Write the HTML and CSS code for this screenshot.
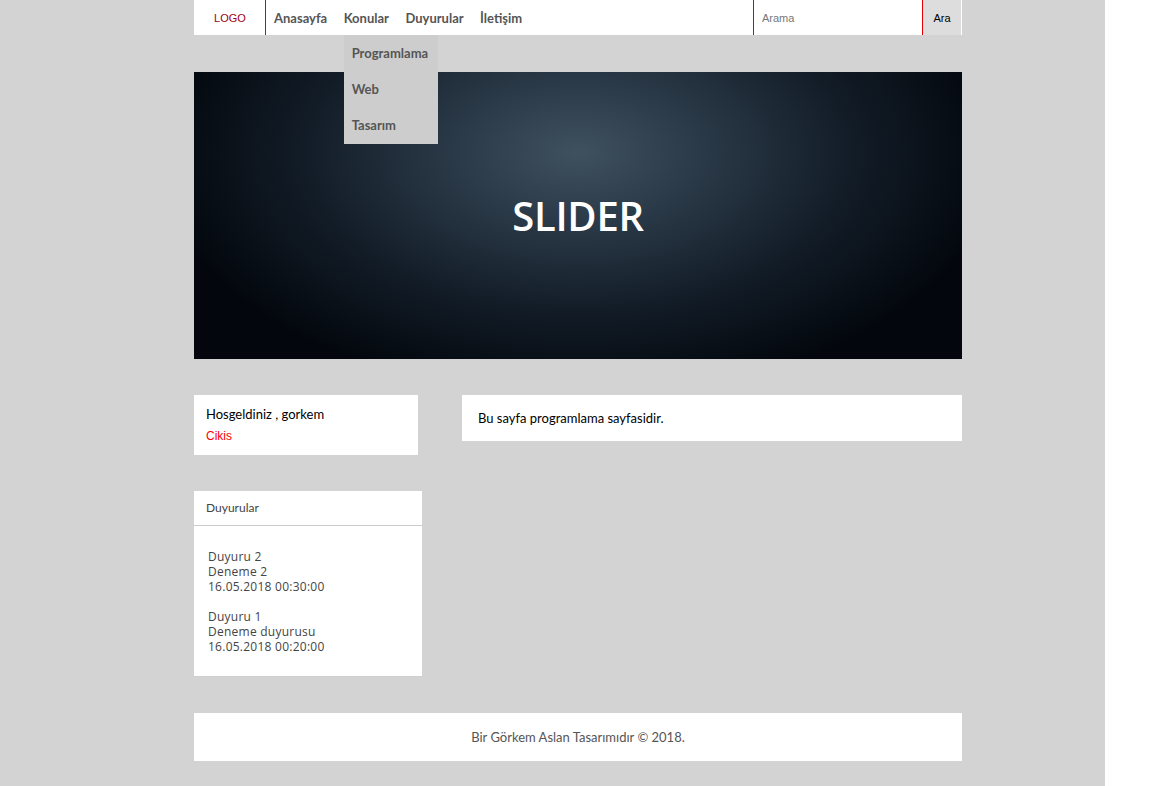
FILE: index.html
```html
<!DOCTYPE html>
<html lang="tr">
<head>
<meta charset="utf-8">
<title>Programlama</title>
<link rel="stylesheet" href="styles.css">
</head>
<body>
<div class="page">
  <div class="container">
    <header class="navbar">
      <div class="logo">LOGO</div>
      <ul class="menu">
        <li><a href="#">Anasayfa</a></li>
        <li class="has-drop"><a href="#">Konular</a>
          <ul class="dropdown">
            <li><a href="#">Programlama</a></li>
            <li><a href="#">Web</a></li>
            <li><a href="#">Tasarım</a></li>
          </ul>
        </li>
        <li><a href="#">Duyurular</a></li>
        <li><a href="#">İletişim</a></li>
      </ul>
      <form class="search">
        <input class="search-input" type="text" placeholder="Arama">
        <button class="search-btn" type="button">Ara</button>
      </form>
    </header>

    <section class="slider">
      <h1 class="slider-title">SLIDER</h1>
    </section>

    <div class="content">
      <aside class="sidebar">
        <div class="box welcome">
          <div class="welcome-text">Hosgeldiniz , gorkem</div>
          <a class="logout" href="#">Cikis</a>
        </div>
        <div class="box news">
          <div class="news-head">Duyurular</div>
          <div class="news-body">
            <div class="news-scroll">
              <div class="news-item">Duyuru 2<br>Deneme 2<br>16.05.2018 00:30:00</div>
              <div class="news-item">Duyuru 1<br>Deneme duyurusu<br>16.05.2018 00:20:00</div>
            </div>
          </div>
        </div>
      </aside>
      <main class="main">
        <div class="box main-box">Bu sayfa programlama sayfasidir.</div>
      </main>
    </div>

    <footer class="footer">Bir Görkem Aslan Tasarımıdır © 2018.</footer>
  </div>
</div>
</body>
</html>
```

FILE: styles.css
```css
* { box-sizing: border-box; }
html, body { margin: 0; padding: 0; background: #ffffff; }
body { font-family: "Lato", "DejaVu Sans", sans-serif; }

.page {
  width: 1105px;
  min-height: 786px;
  background: #d3d3d3;
  padding-bottom: 25px;
}
.container {
  width: 768px;
  margin-left: 194px;
}

/* navbar */
.navbar {
  height: 35px;
  background: #fff;
  display: flex;
  align-items: stretch;
}
.logo {
  width: 72px;
  border-right: 1px solid #e00000;
  color: #a00010;
  font-family: "Liberation Sans", Arial, sans-serif;
  font-size: 11px;
  display: flex;
  align-items: center;
  justify-content: center;
  padding-left: 1px;
}
.menu {
  list-style: none;
  margin: 0;
  padding: 0 0 0 8px;
  display: flex;
  gap: 16.5px;
  flex: 1;
}
.menu > li {
  position: relative;
  display: flex;
  align-items: center;
}
.menu a {
  color: #555;
  font-weight: bold;
  font-size: 13px;
  text-decoration: none;
}
.dropdown {
  position: absolute;
  top: 35px;
  left: 0;
  list-style: none;
  margin: 0;
  padding: 0;
  background: #cdcdcd;
  width: 94px;
  z-index: 5;
}
.dropdown li {
  height: 36px;
  display: flex;
  align-items: center;
  padding-left: 8px;
}
.dropdown li:last-child { height: 37px; padding-bottom: 2px; }

.search {
  display: flex;
  margin: 0 1px 0 0;
}
.search-input {
  width: 170px;
  height: 35px;
  border: none;
  border-left: 1px solid #e00000;
  border-right: 1px solid #e00000;
  padding: 0 8px;
  font-family: "Liberation Sans", Arial, sans-serif;
  font-size: 11px;
  color: #333;
  background: #fff;
  outline: none;
}
.search-input::placeholder { color: #777; }
.search-btn {
  width: 38px;
  height: 35px;
  border: none;
  background: #dddddd;
  font-family: "Liberation Sans", Arial, sans-serif;
  font-size: 11px;
  color: #000;
  padding: 0;
}

/* slider */
.slider {
  margin-top: 37px;
  height: 287px;
  background: radial-gradient(ellipse 55% 85% at 50% 28%, #3f505f 0%, #2a3947 30%, #121c27 65%, #03070d 100%);
  display: flex;
  align-items: center;
  justify-content: center;
}
.slider-title {
  margin: 0;
  color: #fff;
  font-weight: 600;
  font-size: 40px;
  font-family: "Open Sans", "Lato", sans-serif;
  letter-spacing: -0.3px;
}

/* content */
.content {
  margin-top: 36px;
  display: flex;
  gap: 40px;
  align-items: flex-start;
}
.sidebar {
  width: 228px;
  display: flex;
  flex-direction: column;
  gap: 36px;
}
.box { background: #fff; }
.welcome {
  width: 224px;
  height: 60px;
  padding: 11px 12px;
}
.welcome-text {
  font-size: 13px;
  color: #000;
  line-height: 16px;
}
.logout {
  display: block;
  margin-top: 7px;
  font-family: "Liberation Sans", Arial, sans-serif;
  font-size: 12px;
  color: #f00;
  text-decoration: none;
}
.news {
  height: 186px;
  border-bottom: 1px solid #cfcfcf;
}
.news-head {
  height: 35px;
  border-bottom: 1px solid #cccccc;
  padding: 0 12px 2px;
  display: flex;
  align-items: center;
  font-size: 12px;
  color: #444;
}
.news-body { padding: 22px 14px 0; }
.news-scroll {
  height: 104px;
  overflow: hidden;
  font-family: "Open Sans", sans-serif;
  font-size: 12px;
  letter-spacing: 0.25px;
  line-height: 15px;
  color: #444;
  padding-top: 1px;
}
.news-item + .news-item { margin-top: 15px; }

.main { flex: 1; }
.main-box {
  height: 46px;
  padding: 0 16px;
  display: flex;
  align-items: center;
  font-size: 13px;
  color: #000;
}

.footer {
  margin-top: 36px;
  height: 48px;
  background: #fff;
  display: flex;
  align-items: center;
  justify-content: center;
  font-size: 13px;
  color: #555;
}
```
